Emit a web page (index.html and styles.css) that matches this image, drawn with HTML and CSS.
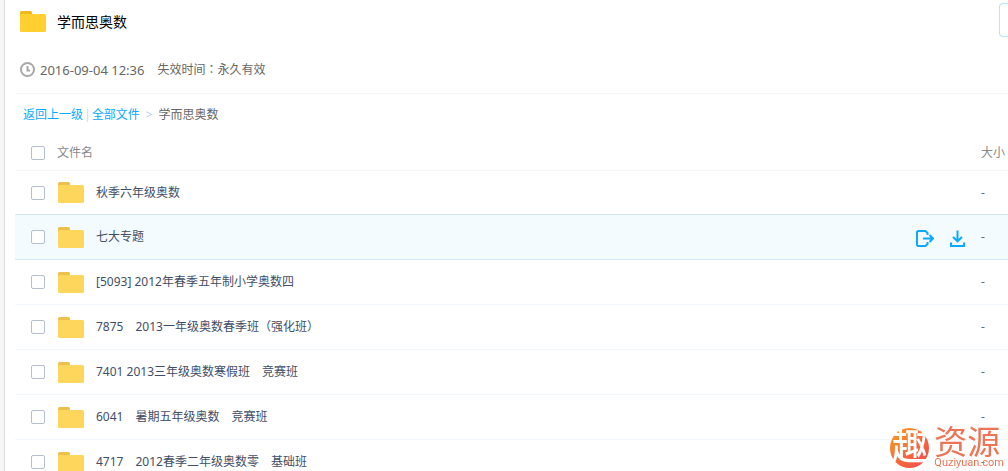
FILE: index.html
```html
<!DOCTYPE html>
<html lang="zh-CN">
<head>
  <meta charset="UTF-8" />
  <meta name="viewport" content="width=device-width, initial-scale=1.0"/>
  <title>学而思奥数</title>
  <link rel="stylesheet" href="styles.css">
</head>
<body>
  <!-- shared icons -->
  <svg class="sprite" aria-hidden="true">
    <symbol id="folder" viewBox="0 0 26 21">
      <path class="folder-tab" d="M0 5V1.5Q0 0 1.5 0H10.500Q12 0 12 1.500V5Z"/>
      <rect class="folder-body" y="3" width="26" height="18" rx="1.500"/>
    </symbol>
  </svg>

  <main class="panel">
    <header class="share-head">
      <svg class="folder folder-main"><use href="#folder"/></svg>
      <h1>学而思奥数</h1>
      <button class="head-btn" aria-label="保存"></button>
    </header>

    <div class="share-info">
      <svg class="clock" viewBox="0 0 15 15">
        <circle cx="7.500" cy="7.500" r="6.500"/>
        <path d="M7.500 4V8.500H10"/>
      </svg>
      <span class="date">2016-09-04 12:36</span>
      <span>失效时间<span class="colon" lang="zh-TW">：</span>永久有效</span>
    </div>

    <nav class="crumbs">
      <a href="#">返回上一级</a>
      <span class="bar">|</span>
      <a href="#">全部文件</a>
      <span class="arrow">&gt;</span>
      <span>学而思奥数</span>
    </nav>

    <table class="files">
      <thead>
        <tr>
          <th><div class="cell"><input type="checkbox" id="all"><label for="all">文件名</label></div></th>
          <th class="size">大小</th>
        </tr>
      </thead>
      <tbody>
        <tr class="before-active">
          <td><div class="cell"><input type="checkbox" id="f1"><svg class="folder"><use href="#folder"/></svg><label for="f1">秋季六年级奥数</label></div></td>
          <td class="size">-</td>
        </tr>
        <tr class="active">
          <td>
            <div class="cell">
              <input type="checkbox" id="f2"><svg class="folder"><use href="#folder"/></svg><label for="f2">七大专题</label>
              <div class="actions">
                <button aria-label="分享">
                  <svg viewBox="0 0 19 17"><path d="M12.500 5V3L10.500 1H3L2 2V15L3 16H10.500L12.500 14V12"/><path d="M8 8.500H18M14.500 5L18 8.500L14.500 12"/></svg>
                </button>
                <button aria-label="下载">
                  <svg viewBox="0 0 19 17"><path d="M9.500 0.500V11M5 7L9.500 11.300L14 7M3 12.500V16H16V12.500"/></svg>
                </button>
              </div>
            </div>
          </td>
          <td class="size">-</td>
        </tr>
        <tr>
          <td><div class="cell"><input type="checkbox" id="f3"><svg class="folder"><use href="#folder"/></svg><label for="f3">[5093] 2012年春季五年制小学奥数四</label></div></td>
          <td class="size">-</td>
        </tr>
        <tr>
          <td><div class="cell"><input type="checkbox" id="f4"><svg class="folder"><use href="#folder"/></svg><label for="f4">7875　2013一年级奥数春季班（强化班）</label></div></td>
          <td class="size">-</td>
        </tr>
        <tr>
          <td><div class="cell"><input type="checkbox" id="f5"><svg class="folder"><use href="#folder"/></svg><label for="f5">7401 2013三年级奥数寒假班　竞赛班</label></div></td>
          <td class="size">-</td>
        </tr>
        <tr>
          <td><div class="cell"><input type="checkbox" id="f6"><svg class="folder"><use href="#folder"/></svg><label for="f6">6041　暑期五年级奥数　竞赛班</label></div></td>
          <td class="size">-</td>
        </tr>
        <tr>
          <td><div class="cell"><input type="checkbox" id="f7"><svg class="folder"><use href="#folder"/></svg><label for="f7">4717　2012春季二年级奥数零　基础班</label></div></td>
          <td class="size">-</td>
        </tr>
      </tbody>
    </table>
  </main>

  <div class="watermark">
    <span class="disc">趣</span>
    <div class="brand">
      <span class="brand-name">资源</span>
      <span class="brand-url">Quziyuan.com</span>
    </div>
  </div>
</body>
</html>
```

FILE: styles.css
```css
* {
  box-sizing: border-box;
}

body {
  margin: 0;
  height: 100vh;
  overflow: hidden;
  background: #f6f6f6;
  color: #666;
  font-family: "Noto Sans", "Noto Sans CJK SC", sans-serif;
  font-size: 12px;
  line-height: 18px;
}

.sprite {
  display: none;
}

.panel {
  min-height: 100vh;
  margin-left: 4px;
  padding-left: 10px;
  border-left: 1px solid #ddd;
  background: #fff;
}

/* folders */
.folder {
  flex: none;
  width: 26px;
  height: 21px;
  --tab: #edc04c;
  --body: #ffd65c;
}

.folder-main {
  --tab: #f0b914;
  --body: #ffd030;
}

.folder-tab {
  fill: var(--tab);
}

.folder-body {
  fill: var(--body);
}

/* head */
.share-head {
  display: flex;
  align-items: center;
  height: 40px;
  padding: 3px 0 0 5px;
}

.share-head h1 {
  flex: 1;
  margin: 0 0 0 11px;
  color: #000;
  font-size: 14px;
  font-weight: normal;
}

.head-btn {
  width: 9px;
  height: 34px;
  margin-bottom: 3px;
  padding: 0;
  border: 1px solid #b9e3fd;
  border-right: 0;
  border-radius: 4px 0 0 4px;
  background: #fff;
}

.share-info {
  display: flex;
  align-items: center;
  height: 54px;
  padding: 6px 0 0 5px;
  border-bottom: 1px solid #f2f4f6;
}

.clock {
  width: 15px;
  height: 15px;
  margin-right: 5px;
  fill: none;
  stroke: #a8a8a8;
  stroke-width: 2;
}

.date {
  margin-right: 13px;
  font-size: 13px;
}

.colon {
  font-family: "Noto Sans CJK TC", sans-serif;
}

.crumbs {
  display: flex;
  align-items: center;
  height: 41px;
  padding-left: 8px;
}

.crumbs a {
  color: #09aaff;
  text-decoration: none;
}

.bar {
  margin: 0 1px;
  color: #c4dbfe;
}

.arrow {
  margin: 0 6px;
  color: #b4cffc;
}

/* file list */
.files {
  width: 100%;
  border-collapse: separate;
  border-spacing: 0;
}

.files th,
.files td {
  height: 45px;
  padding: 0;
  border-bottom: 1px solid #f0f6fc;
  color: #424e67;
  font-weight: normal;
  text-align: left;
}

.files th {
  height: 36px;
  border-color: #f2f4f6;
  color: #888;
}

.files .size {
  width: 27px;
  color: #666;
}

.files th.size {
  color: #888;
}

.files .before-active td {
  height: 44px;
  border-color: #d2e8fa;
}

.files .active td {
  background: #f4fbff;
  border-color: #d2e8fa;
}

.cell {
  display: flex;
  align-items: center;
  padding-left: 16px;
}

.cell input {
  appearance: none;
  flex: none;
  width: 14px;
  height: 14px;
  margin: 0 13px 0 0;
  border: 1px solid #b4c0d0;
  border-radius: 2px;
  background: #fff;
}

.cell input:checked {
  background: #09aaff;
}

th .cell input {
  margin-right: 12px;
}

.cell .folder {
  margin-right: 12px;
}

.actions {
  display: flex;
  gap: 14px;
  margin-left: auto;
  padding: 3px 14px 0 0;
}

.actions button {
  width: 19px;
  height: 17px;
  padding: 0;
  border: 0;
  background: none;
  cursor: pointer;
}

.actions svg {
  display: block;
  width: 19px;
  height: 17px;
  fill: none;
  stroke: #09aaff;
  stroke-width: 2;
}

/* site mark over the list */
.watermark {
  position: fixed;
  right: 4px;
  bottom: 2px;
  display: flex;
  align-items: center;
  gap: 5px;
  pointer-events: none;
}

.disc {
  width: 39px;
  height: 40px;
  border-radius: 50%;
  background: linear-gradient(135deg, #f9a11b, #f4683c 55%, #f04a50);
  color: #fff;
  font-size: 36px;
  font-weight: 500;
  line-height: 38px;
  text-align: center;
}

.brand {
  display: flex;
  flex-direction: column;
  color: #ee7455;
}

.brand-name {
  font-size: 33px;
  font-weight: 400;
  line-height: 30px;
}

.brand-url {
  font-family: Roboto, sans-serif;
  font-size: 11px;
  line-height: 12px;
}
```
